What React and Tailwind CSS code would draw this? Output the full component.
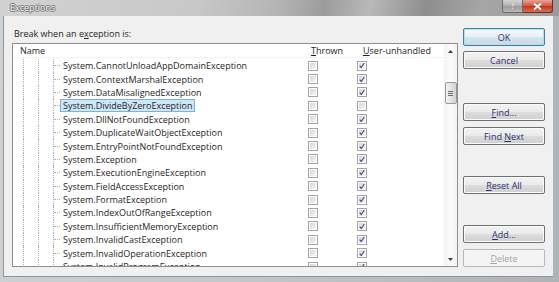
import React from "react";

const rows = [
  ["System.CannotUnloadAppDomainException", true],
  ["System.ContextMarshalException", true],
  ["System.DataMisalignedException", true],
  ["System.DivideByZeroException", false, true],
  ["System.DllNotFoundException", true],
  ["System.DuplicateWaitObjectException", true],
  ["System.EntryPointNotFoundException", true],
  ["System.Exception", true],
  ["System.ExecutionEngineException", true],
  ["System.FieldAccessException", true],
  ["System.FormatException", true],
  ["System.IndexOutOfRangeException", true],
  ["System.InsufficientMemoryException", true],
  ["System.InvalidCastException", true],
  ["System.InvalidOperationException", true],
  ["System.InvalidProgramException", true],
];

function Box({ checked }) {
  return (
    <div className="w-[10px] h-[10px] border border-[#a4a4a4] bg-white p-[1px] shrink-0">
      <div className="w-full h-full bg-[linear-gradient(135deg,#d6d6d6,#f6f6f6)] flex items-center justify-center">
        {checked && (
          <svg width="7" height="7" viewBox="0 0 7 7">
            <path d="M0.8 3.6 L2.6 5.8 L6.2 0.6" stroke="#3a4c9c" strokeWidth="1.3" fill="none" />
          </svg>
        )}
      </div>
    </div>
  );
}

function Btn({ children, mt, primary, disabled }) {
  const base =
    "w-[82px] h-[18px] shrink-0 rounded-[2px] border flex items-center justify-center text-[9px] leading-none";
  let cls;
  if (disabled) {
    cls = " border-[#b5b9bc] bg-[#f4f4f4] text-[#a3a3a3]";
  } else if (primary) {
    cls =
      " border-[#3c7fb1] shadow-[inset_0_0_0_1px_#b4ddf3] bg-[linear-gradient(#f4f9fc_0%,#e9f1f6_50%,#d6e4ee_51%,#c8dae6_100%)] text-[#2b2f6b]";
  } else {
    cls =
      " border-[#707070] shadow-[inset_0_0_0_1px_#fbfbfb] bg-[linear-gradient(#f2f2f2_0%,#ebebeb_50%,#dddddd_51%,#cfcfcf_100%)] text-[#2b2f6b]";
  }
  return (
    <div className={base + cls + " " + mt}>
      <span className="whitespace-pre">{children}</span>
    </div>
  );
}

export default function App() {
  return (
    <div className="w-[559px] h-[282px] flex flex-col bg-[linear-gradient(100deg,#cfd2d4_0%,#c3c6c8_50%,#aeb3b6_100%)] font-['Open_Sans',sans-serif] overflow-hidden">
      {/* Title bar */}
      <div className="h-[16px] shrink-0 flex items-start bg-[linear-gradient(100deg,#d2d2d2_0%,#c8c8c8_35%,#b4b4b4_50%,#9c9c9c_58%,#b9b9b9_66%,#8e8e8e_76%,#a6a6a6_86%,#9a9a9a_100%)]">
        <span className="ml-[10px] mt-[2px] text-[9px] leading-[12px] text-[#fafafa] [text-shadow:1px_0_0_#707070,-1px_0_0_#707070,0_1px_0_#707070,0_-1px_0_#707070]">
          Exceptions
        </span>
        <div className="ml-auto mr-[6px] flex">
          <div className="w-[21px] h-[13px] rounded-bl-[3px] border border-t-0 border-[#6b6b6b] bg-[linear-gradient(#d4d4d4,#b0b0b0_50%,#9a9a9a_51%,#b8b8b8)] flex items-center justify-center text-[8px] leading-none text-white font-bold [text-shadow:0_0_1px_#333]">
            ?
          </div>
          <div className="w-[30px] h-[13px] rounded-br-[3px] border border-l-0 border-t-0 border-[#6b2a22] bg-[linear-gradient(#e8a493,#d0563f_50%,#c0331b_51%,#d8705a)] flex items-center justify-center">
            <svg width="9" height="7" viewBox="0 0 9 7">
              <path d="M1 0.5 L8 6.5 M8 0.5 L1 6.5" stroke="#ffffff" strokeWidth="1.8" />
            </svg>
          </div>
        </div>
      </div>

      {/* Client area */}
      <div className="flex-1 min-h-0 ml-[3px] mr-[6px] mb-[5px] border-l border-b border-[#8f9499] bg-[#f0f0f0] flex text-[#1e1e1e]">
        {/* Left column */}
        <div className="flex flex-col pl-[8px] pt-[10px]">
          <div className="ml-[2px] h-[16px] text-[9px] leading-[16px]">
            Break when an e<span className="underline">x</span>ception is:
          </div>
          <div className="mt-[1px] w-[446px] h-[224px] shrink-0 border border-[#8c8f93] bg-white flex overflow-hidden">
            <div className="flex-1 flex flex-col overflow-hidden">
              {/* header */}
              <div className="h-[14px] shrink-0 flex items-center text-[9px] leading-none text-[#1e1e1e] border-b border-[#f2f2f2]">
                <div className="w-[295px] pl-[7px]">Name</div>
                <div className="w-[49px] pl-[3px]">
                  <span className="underline">T</span>hrown
                </div>
                <div className="pl-[6px]">
                  <span className="underline">U</span>ser-unhandled
                </div>
              </div>
              {/* rows */}
              <div className="flex flex-col pt-[1px]">
                {rows.map(([name, user, sel], i) => (
                  <div key={i} className="h-[13.4px] shrink-0 flex items-stretch text-[9px]">
                    <div className="w-[295px] flex items-stretch">
                      <div className="w-[10px] shrink-0" />
                      <div className="w-[15px] shrink-0 border-l border-dotted border-[#b0b0b0]" />
                      <div className="w-[15px] shrink-0 border-l border-dotted border-[#b0b0b0]" />
                      <div className="w-[7px] shrink-0 border-l border-dotted border-[#b0b0b0] flex items-center">
                        <div className="w-full border-t border-dotted border-[#b0b0b0]" />
                      </div>
                      <div className="flex items-center">
                        <span
                          className={
                            "h-[13px] leading-[11px] px-[2px] border whitespace-nowrap " +
                            (sel ? "border-[#7fb0d8] bg-[#cfe6f6]" : "border-transparent")
                          }
                        >
                          {name}
                        </span>
                      </div>
                    </div>
                    <div className="w-[49px] flex items-center">
                      <Box checked={false} />
                    </div>
                    <div className="flex items-center">
                      <Box checked={user} />
                    </div>
                  </div>
                ))}
              </div>
            </div>
            {/* scrollbar */}
            <div className="w-[13px] shrink-0 flex flex-col items-center bg-[linear-gradient(90deg,#f3f3f3,#fbfbfb_50%,#f3f3f3)]">
              <div className="h-[14px] shrink-0 w-full flex items-center justify-center">
                <svg width="5" height="3" viewBox="0 0 5 3">
                  <path d="M0 3 L2.5 0 L5 3 Z" fill="#3c3c3c" />
                </svg>
              </div>
              <div className="mt-[24px] shrink-0 w-[12px] h-[22px] rounded-[2px] border border-[#979797] bg-[linear-gradient(90deg,#f3f3f3,#e3e3e3_50%,#d3d3d3)] flex flex-col items-center justify-center gap-[1px]">
                <div className="w-[5px] h-px bg-[#6c6c6c]" />
                <div className="w-[5px] h-px bg-[#6c6c6c]" />
                <div className="w-[5px] h-px bg-[#6c6c6c]" />
              </div>
              <div className="flex-1" />
              <div className="h-[14px] shrink-0 w-full flex items-center justify-center">
                <svg width="5" height="3" viewBox="0 0 5 3">
                  <path d="M0 0 L5 0 L2.5 3 Z" fill="#3c3c3c" />
                </svg>
              </div>
            </div>
          </div>
        </div>

        {/* Right column buttons */}
        <div className="flex flex-col ml-[5px]">
          <Btn mt="mt-[12px]" primary>OK</Btn>
          <Btn mt="mt-[5px]">Cancel</Btn>
          <Btn mt="mt-[34px]">
            <span className="underline">F</span>ind...
          </Btn>
          <Btn mt="mt-[6px]">
            Find <span className="underline">N</span>ext
          </Btn>
          <Btn mt="mt-[31px]">
            <span className="underline">R</span>eset All
          </Btn>
          <Btn mt="mt-[31px]">
            <span className="underline">A</span>dd...
          </Btn>
          <Btn mt="mt-[6px]" disabled>
            <span className="underline">D</span>elete
          </Btn>
        </div>
      </div>
    </div>
  );
}
